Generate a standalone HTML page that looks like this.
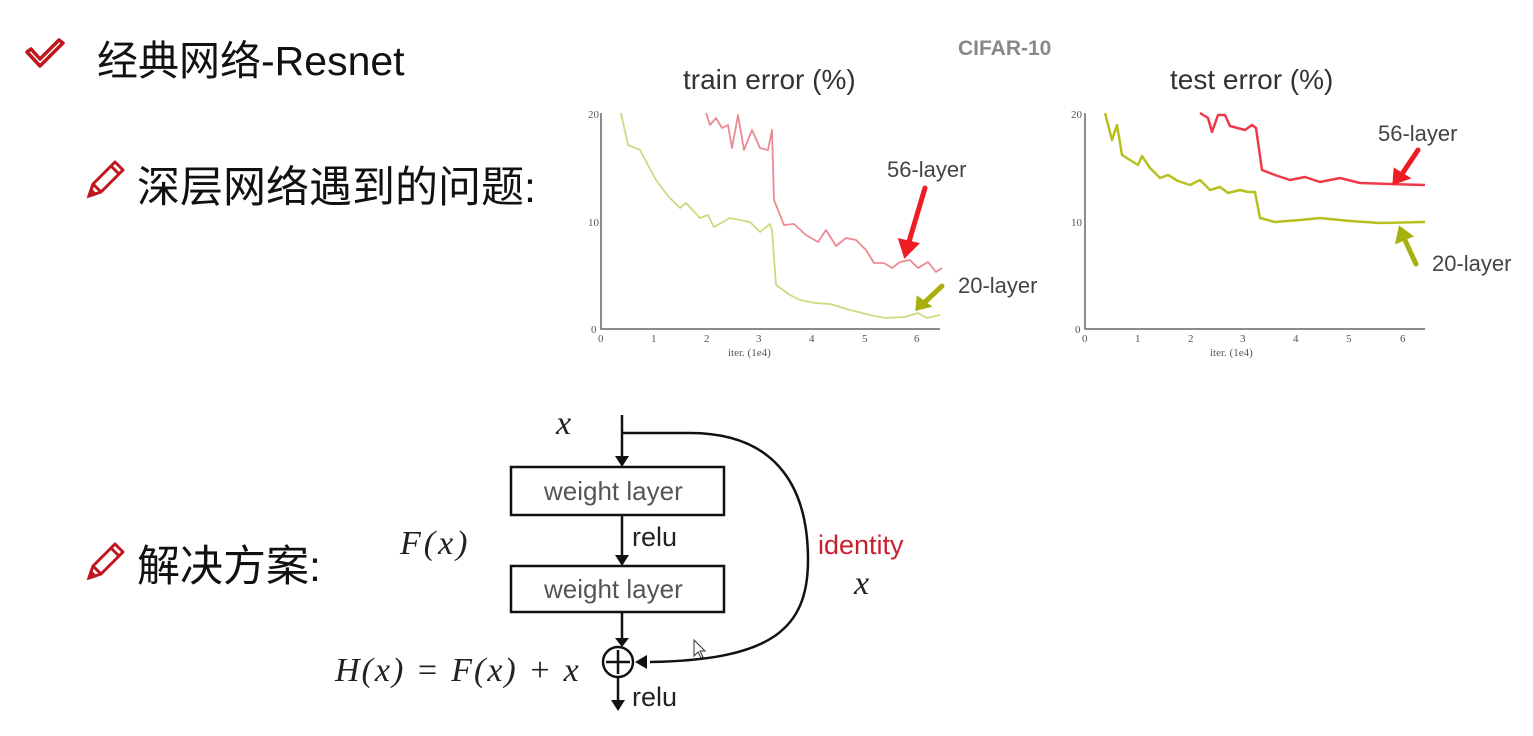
<!DOCTYPE html>
<html><head><meta charset="utf-8"><style>
html,body{margin:0;padding:0;background:#fff;}
body{width:1533px;height:736px;position:relative;overflow:hidden;font-family:"Liberation Sans","Noto Sans CJK SC",sans-serif;}
</style></head><body>
<svg width="1533" height="736" style="position:absolute;left:0;top:0" font-family="Liberation Sans, Noto Sans CJK SC, sans-serif">
<path d="M27 52 L40 66 L63 43 L59 40 L40 59 L31 49 Z" fill="none" stroke="#c0161e" stroke-width="3.5" stroke-linejoin="round"/>
<g transform="translate(85,160)">
<path d="M4 36 L8 24 L30 2 L38 10 L16 32 Z" fill="none" stroke="#c0161e" stroke-width="3" stroke-linejoin="round"/>
<path d="M8 24 L16 32 M26 6 L34 14 M4 36 L10 34 L6 30 Z" stroke="#c0161e" stroke-width="3" fill="#c0161e"/>
</g>
<g transform="translate(85,542)">
<path d="M4 36 L8 24 L30 2 L38 10 L16 32 Z" fill="none" stroke="#c0161e" stroke-width="3" stroke-linejoin="round"/>
<path d="M8 24 L16 32 M26 6 L34 14 M4 36 L10 34 L6 30 Z" stroke="#c0161e" stroke-width="3" fill="#c0161e"/>
</g>
<text x="97" y="75" font-size="41" fill="#111">经典网络-Resnet</text>
<text x="137" y="202" font-size="43" fill="#111">深层网络遇到的问题:</text>
<text x="137" y="581" font-size="43" fill="#111">解决方案:</text>

<text x="958" y="55" font-size="21" font-weight="bold" fill="#888">CIFAR-10</text>
<text x="683" y="89" font-size="28" fill="#333">train error (%)</text>
<text x="1170" y="89" font-size="28" fill="#333">test error (%)</text>
<g stroke="#666" stroke-width="1.5" fill="none">
<path d="M601 113 L601 329 L940 329"/>
<path d="M1085 113 L1085 329 L1425 329"/>
</g>
<g font-family="Liberation Serif, serif" font-size="11" fill="#555">
<text x="588" y="118">20</text><text x="588" y="226">10</text><text x="591" y="333">0</text>
<text x="598" y="342">0</text><text x="651" y="342">1</text><text x="704" y="342">2</text><text x="756" y="342">3</text><text x="809" y="342">4</text><text x="862" y="342">5</text><text x="914" y="342">6</text>
<text x="728" y="356">iter. (1e4)</text>
<text x="1071" y="118">20</text><text x="1071" y="226">10</text><text x="1075" y="333">0</text>
<text x="1082" y="342">0</text><text x="1135" y="342">1</text><text x="1188" y="342">2</text><text x="1240" y="342">3</text><text x="1293" y="342">4</text><text x="1346" y="342">5</text><text x="1400" y="342">6</text>
<text x="1210" y="356">iter. (1e4)</text>
</g>
<g fill="none" stroke-width="1.8" stroke-linejoin="round">
<polyline stroke="#d0d880" points="621,113 628,145 640,150 656,180 668,196 680,208 686,203 700,218 708,215 714,227 730,218 750,222 760,232 770,224 772,230 776,285 790,295 800,300 815,303 830,304 850,310 870,315 885,318 905,317 918,313 927,318 940,315"/>
<polyline stroke="#ec8a92" points="706,113 710,125 716,118 722,128 728,125 732,148 738,115 744,150 752,130 760,148 768,150 772,130 774,200 784,225 794,224 806,235 818,242 826,230 836,246 846,238 856,240 866,250 874,263 884,263 892,268 900,262 910,260 918,268 928,262 936,272 942,268"/>
</g>
<g fill="none" stroke-width="2.5" stroke-linejoin="round">
<polyline stroke="#b8c020" points="1105,113 1112,140 1117,125 1122,155 1130,160 1138,165 1142,156 1150,168 1160,178 1168,175 1178,181 1190,185 1200,180 1210,190 1220,187 1228,193 1240,190 1248,192 1255,192 1260,218 1275,222 1300,220 1320,218 1350,221 1380,223 1425,222"/>
<polyline stroke="#ee3a48" points="1200,113 1208,118 1212,132 1218,115 1225,115 1230,126 1245,130 1252,125 1256,128 1262,170 1275,175 1290,180 1305,177 1320,182 1340,178 1360,183 1390,184 1425,185"/>
</g>
<g stroke-width="5" stroke-linecap="round">
<path d="M925 188 L908 245" stroke="#ee1c24"/><path d="M900 240 L905 256 L917 244 Z" fill="#ee1c24" stroke="#ee1c24" stroke-width="3"/>
<path d="M942 286 L925 302" stroke="#a8b010"/><path d="M918 298 L917 309 L929 306 Z" fill="#a8b010" stroke="#a8b010" stroke-width="3"/>
<path d="M1418 150 L1402 174" stroke="#ee1c24"/><path d="M1395 170 L1394 183 L1408 178 Z" fill="#ee1c24" stroke="#ee1c24" stroke-width="3"/>
<path d="M1416 264 L1404 238" stroke="#a8b010"/><path d="M1397 242 L1400 228 L1411 236 Z" fill="#a8b010" stroke="#a8b010" stroke-width="3"/>
</g>
<g font-size="22" fill="#444">
<text x="887" y="177">56-layer</text><text x="958" y="293">20-layer</text>
<text x="1378" y="141">56-layer</text><text x="1432" y="271">20-layer</text>
</g>

<g stroke="#111" stroke-width="2.5" fill="none">
<path d="M622 415 L622 458"/>
<rect x="511" y="467" width="213" height="48"/>
<path d="M622 515 L622 556"/>
<rect x="511" y="566" width="213" height="46"/>
<path d="M622 612 L622 640"/>
<circle cx="618" cy="662" r="15"/>
<path d="M606 662 L630 662 M618 650 L618 674"/>
<path d="M618 677 L618 702"/>
<path d="M622 433 L690 433 C770 433 808 480 808 560 C808 630 770 660 650 662"/>
</g>
<g fill="#111">
<path d="M615 456 L629 456 L622 467 Z"/>
<path d="M615 555 L629 555 L622 566 Z"/>
<path d="M615 638 L629 638 L622 647 Z"/>
<path d="M611 700 L625 700 L618 711 Z"/>
<path d="M647 655 L647 669 L635 662 Z"/>
</g>
<g font-size="26" fill="#555">
<text x="544" y="500">weight layer</text>
<text x="544" y="598">weight layer</text>
</g>
<g font-size="27" fill="#222">
<text x="632" y="546">relu</text>
<text x="632" y="706">relu</text>
</g>
<text x="818" y="554" font-size="27" fill="#c8202e">identity</text>
<g font-family="Liberation Serif, serif" font-style="italic" font-size="34" fill="#222">
<text x="556" y="434">x</text>
<text x="400" y="554" letter-spacing="3">F(x)</text>
<text x="854" y="594">x</text>
<text x="335" y="681" letter-spacing="2">H(x) = F(x) + x</text>
</g>
<path d="M694 640 L694 656 L698 652 L701 658 L703 657 L700 651 L705 651 Z" fill="#fff" stroke="#333" stroke-width="1"/>
</svg>
</body></html>
